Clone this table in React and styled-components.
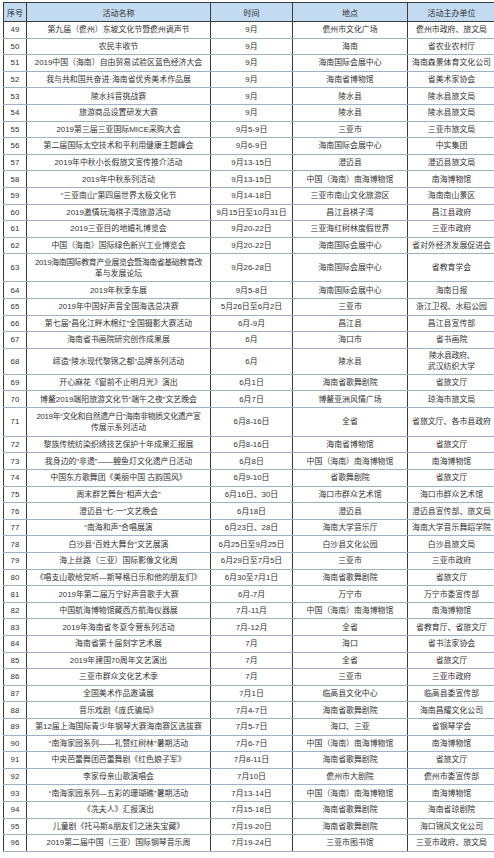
import React from 'react';
import styled, { createGlobalStyle } from 'styled-components';

const GlobalStyle = createGlobalStyle`
  body {
    margin: 0;
    background: #ffffff;
  }
`;

const rows = [
  ['49', '第九届（儋州）东坡文化节暨儋州调声节', '9月', '儋州市文化广场', '儋州市政府、旅文局'],
  ['50', '农民丰收节', '9月', '海南', '省农业农村厅'],
  ['51', '2019中国（海南）自由贸易试验区蓝色经济大会', '9月', '海南国际会展中心', '海南森景体育文化公司'],
  ['52', '我与共和国共奋进·海南省优秀美术作品展', '9月', '海南省博物馆', '省美术家协会'],
  ['53', '陵水抖音挑战赛', '9月', '陵水县', '陵水县旅文局'],
  ['54', '旅游商品设置研发大赛', '9月', '陵水县', '陵水县旅文局'],
  ['55', '2019第三届三亚国际MICE采购大会', '9月5-9日', '三亚市', '三亚市旅文局'],
  ['56', '第二届国际太空技术和平利用健康主题峰会', '9月6-9日', '海南国际会展中心', '中实集团'],
  ['57', '2019年中秋小长假旅文宣传推介活动', '9月13-15日', '澄迈县', '澄迈县旅文局'],
  ['58', '2019年中秋系列活动', '9月13-15日', '中国（海南）南海博物馆', '南海博物馆'],
  ['59', '“三亚南山”第四届世界太极文化节', '9月14-18日', '三亚市南山文化旅游区', '海南南山景区'],
  ['60', '2019激情玩海棋子湾旅游活动', '9月15日至10月31日', '昌江县棋子湾', '昌江县政府'],
  ['61', '2019三亚目的地婚礼博览会', '9月20-22日', '三亚海红树林度假世界', '三亚市政府'],
  ['62', '中国（海南）国际绿色新兴工业博览会', '9月20-22日', '海南国际会展中心', '省对外经济发展促进会'],
  ['63', ['2019海南国际教育产业展览会暨海南省基础教育改', '革与发展论坛'], '9月26-28日', '海南国际会展中心', '省教育学会', 28],
  ['64', '2019年秋季车展', '9月5-8日', '海南国际会展中心', '海南日报'],
  ['65', '2019年中国好声音全国海选总决赛', '5月26日至6月2日', '三亚市', '浙江卫视、水稻公园'],
  ['66', '第七届“昌化江畔木棉红”全国摄影大赛活动', '6月-9月', '昌江县', '昌江县宣传部'],
  ['67', '海南省书画院研究创作成果展', '6月', '海口市', '省书画院'],
  ['68', '缔造“陵水现代黎锦之都”品牌系列活动', '6月', '陵水县', ['陵水县政府、', '武汉纺织大学'], 26],
  ['69', '开心麻花《窗前不止明月光》演出', '6月1日', '海南省歌舞剧院', '省旅文厅'],
  ['70', '博鳌2019端阳旅游文化节“端午之夜”文艺晚会', '6月7日', '博鳌亚洲风情广场', '琼海市旅文局'],
  ['71', ['2019年“文化和自然遗产日”海南非物质文化遗产宣', '传展示系列活动'], '6月8-16日', '全省', '省旅文厅、各市县政府', 29],
  ['72', '黎族传统纺染织绣技艺保护十年成果汇报展', '6月8-16日', '海南省博物馆', '省旅文厅'],
  ['73', '我身边的“非遗”——鲤鱼灯文化遗产日活动', '6月8日', '中国（海南）南海博物馆', '南海博物馆'],
  ['74', '中国东方歌舞团《美丽中国 古韵国风》', '6月9-10日', '省歌舞剧院', '省旅文厅'],
  ['75', '周末群艺舞台“相声大会”', '6月16日、30日', '海口市群众艺术馆', '海口市群众艺术馆'],
  ['76', '澄迈县“七·一”文艺晚会', '6月18日', '澄迈县', '澄迈县宣传部、旅文局'],
  ['77', '“南海和声”合唱展演', '6月23日、28日', '海南大学音乐厅', '海南大学音乐舞蹈学院'],
  ['78', '白沙县“百姓大舞台”文艺展演', '6月25日至9月25日', '白沙县文化公园', '白沙县旅文局'],
  ['79', '海上丝路（三亚）国际影像文化周', '6月29日至7月5日', '三亚市', '三亚市政府'],
  ['80', '《唱支山歌给党听—斯琴格日乐和他的朋友们》', '6月30至7月1日', '海南省歌舞剧院', '省旅文厅'],
  ['81', '2019年第二届万宁好声音歌手大赛', '6月-7月', '万宁市', '万宁市委宣传部'],
  ['82', '中国航海博物馆藏西方航海仪器展', '7月-11月', '中国（海南）南海博物馆', '南海博物馆'],
  ['83', '2019年海南省冬夏令营系列活动', '7月-12月', '全省', '省教育厅、省旅文厅'],
  ['84', '海南省第十届刻字艺术展', '7月', '海口', '省书法家协会'],
  ['85', '2019年建国70周年文艺演出', '7月', '全省', '省旅文厅'],
  ['86', '三亚市群众文化艺术季', '7月', '三亚市', '三亚市政府'],
  ['87', '全国美术作品邀请展', '7月1日', '临高县文化中心', '临高县委宣传部'],
  ['88', '音乐戏剧《庞氏骗局》', '7月4-7日', '海南省歌舞剧院', '海南昌耀文化公司'],
  ['89', '第12届上海国际青少年钢琴大赛海南赛区选拔赛', '7月5-7日', '海口、三亚', '省钢琴学会'],
  ['90', '“南海家园系列——礼赞红树林”暑期活动', '7月6-7日', '中国（海南）南海博物馆', '南海博物馆'],
  ['91', '中央芭蕾舞团芭蕾舞剧《红色娘子军》', '7月8-11日', '海南省歌舞剧院', '省旅文厅'],
  ['92', '李家母亲山歌演唱会', '7月10日', '儋州市大剧院', '儋州市委宣传部'],
  ['93', '“南海家园系列—五彩的珊瑚礁”暑期活动', '7月13-14日', '中国（海南）南海博物馆', '南海博物馆'],
  ['94', '《冼夫人》汇报演出', '7月15-18日', '海南省歌舞剧院', '海南省琼剧院'],
  ['95', '儿童剧《托马斯&朋友们之迷失宝藏》', '7月19-20日', '海南省歌舞剧院', '海口锦风文化公司'],
  ['96', '2019第二届中国（三亚）国际钢琴音乐周', '7月19-24日', '三亚市图书馆', '三亚市政府、旅文局'],
];

const columns = [
  { title: '序号', width: 22 },
  { title: '活动名称', width: 183 },
  { title: '时间', width: 81 },
  { title: '地点', width: 114 },
  { title: '活动主办单位', width: 87 },
];

const Page = styled.div`
  padding: 2px 0 0 3px;
  font-family: "Liberation Sans", "Noto Sans CJK SC", sans-serif;
`;

const Table = styled.table`
  width: 487px;
  table-layout: fixed;
  border-collapse: collapse;
  border: 1px solid #3c3c3c;
`;

const HeadCell = styled.th`
  width: ${p => p.$w}px;
  height: 18px;
  padding: 0;
  background: #c3dbf0;
  color: #2e2e2e;
  font-size: 8px;
  font-weight: normal;
  text-align: center;
  border-left: 1px solid #3c3c3c;
  border-bottom: 1px solid #3c3c3c;
`;

const Row = styled.tr`
  height: ${p => p.$h}px;
`;

const Cell = styled.td`
  padding: 0;
  color: #333333;
  font-size: 7.9px;
  line-height: 11px;
  text-align: center;
  white-space: nowrap;
  border-left: 1px solid #3c3c3c;
  border-bottom: 1px solid #9fb1c4;
`;

const Line = styled.div`
  letter-spacing: ${p => (p.$tight ? '-0.35px' : '0')};
`;

const renderText = v =>
  Array.isArray(v)
    ? v.map((line, i) => <Line key={i} $tight={i === 0}>{line}</Line>)
    : v;

export default function App() {
  return (
    <Page>
      <GlobalStyle />
      <Table>
        <thead>
          <tr>
            {columns.map(c => (
              <HeadCell key={c.title} $w={c.width}>{c.title}</HeadCell>
            ))}
          </tr>
        </thead>
        <tbody>
          {rows.map(r => (
            <Row key={r[0]} $h={r[5] || 16.6}>
              {r.slice(0, 5).map((v, i) => (
                <Cell key={i}>{renderText(v)}</Cell>
              ))}
            </Row>
          ))}
        </tbody>
      </Table>
    </Page>
  );
}
